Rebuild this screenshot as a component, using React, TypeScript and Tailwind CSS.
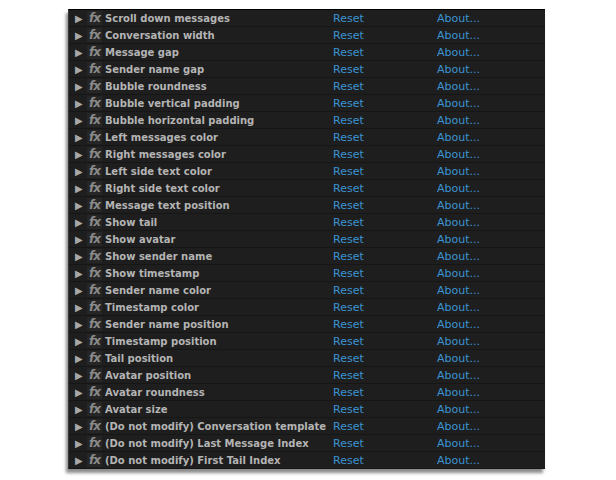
import React from "react";

const rows = [
  "Scroll down messages",
  "Conversation width",
  "Message gap",
  "Sender name gap",
  "Bubble roundness",
  "Bubble vertical padding",
  "Bubble horizontal padding",
  "Left messages color",
  "Right messages color",
  "Left side text color",
  "Right side text color",
  "Message text position",
  "Show tail",
  "Show avatar",
  "Show sender name",
  "Show timestamp",
  "Sender name color",
  "Timestamp color",
  "Sender name position",
  "Timestamp position",
  "Tail position",
  "Avatar position",
  "Avatar roundness",
  "Avatar size",
  "(Do not modify) Conversation template",
  "(Do not modify) Last Message Index",
  "(Do not modify) First Tail Index",
];

const Row = ({ label }: { label: string }) => (
  <div className="flex h-[17px] items-baseline whitespace-nowrap border-b border-[#161616] pt-[1px] text-[10px] leading-[14px]">
    <span className="ml-[6px] w-[12px] text-[10px] text-[#a8a8a8]">▶</span>
    <span className="mr-[3px] w-[15px] bg-[#262626] text-center text-[12px] font-bold italic tracking-[-1px] text-[#8a8a8a]">
      fx
    </span>
    <span className="w-[228px] font-bold text-[#b4b4b4]">{label}</span>
    <span className="w-[104px] text-[11px] text-[#3b94d2]">Reset</span>
    <span className="text-[11px] text-[#3b94d2]">About...</span>
  </div>
);

export default function App() {
  return (
    <div className="h-[480px] w-[616px] bg-white pt-[9px] font-['DejaVu_Sans',sans-serif]">
      <div className="ml-[68px] w-[477px] border-t border-l border-[#000] border-l-[#3a3a3a] bg-[#1e1e1e] shadow-[-2px_4px_3px_rgba(0,0,0,0.45)]">
        {rows.map((r) => (
          <Row key={r} label={r} />
        ))}
      </div>
    </div>
  );
}
